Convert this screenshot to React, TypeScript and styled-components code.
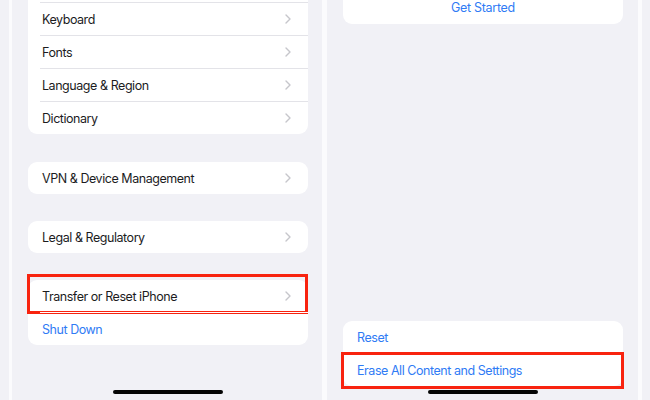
import React from "react";
import styled, { createGlobalStyle } from "styled-components";

const Global = createGlobalStyle`
  html, body { margin: 0; padding: 0; background: #ffffff; }
  body { font-family: Inter, "Noto Sans", "Liberation Sans", sans-serif; -webkit-font-smoothing: antialiased; }
`;

const Strip = styled.div`
  display: flex;
  width: 650px;
  height: 400px;
  overflow: hidden;
  background: #ffffff;
`;

const Gutter = styled.div<{ $w: number; $gray?: boolean }>`
  flex: 0 0 ${(p) => p.$w}px;
  background: ${(p) => (p.$gray ? "#f1f1f6" : "#fbfbfd")};
`;

const Phone = styled.div<{ $w: number; $pr: number }>`
  position: relative;
  flex: 0 0 ${(p) => p.$w}px;
  height: 400px;
  overflow: hidden;
  background: #f1f1f6;
  display: flex;
  flex-direction: column;
  padding: 0 ${(p) => p.$pr}px 0 16px;
  box-sizing: border-box;
`;

const Content = styled.div`
  display: flex;
  flex-direction: column;
  flex: 1;
`;

const Card = styled.div<{ $gap?: number; $clipped?: boolean }>`
  background: #ffffff;
  border-radius: ${(p) => (p.$clipped ? "0 0 9px 9px" : "9px")};
  margin-top: ${(p) => p.$gap ?? 0}px;
  display: flex;
  flex-direction: column;
`;

const Stub = styled.div<{ $h: number }>`
  height: ${(p) => p.$h}px;
`;

const Row = styled.div<{ $blue?: boolean; $first?: boolean; $plain?: boolean }>`
  position: relative;
  height: 32px;
  display: flex;
  align-items: center;
  justify-content: space-between;
  padding: 0 17px 0 ${(p) => (p.$first ? 14 : 2)}px;
  margin-left: ${(p) => (p.$first ? 0 : 12)}px;
  font-size: 12.5px;
  letter-spacing: -0.45px;
  color: ${(p) => (p.$blue ? "#2f7bf5" : "#1c1c1e")};
  border-top: ${(p) => (p.$first ? "none" : p.$plain ? "1px solid #ffffff" : "1px solid #e3e3e8")};
`;

const Highlight = styled.div<{ $t: number; $r: number; $b: number; $l: number }>`
  position: absolute;
  top: ${(p) => p.$t}px;
  right: ${(p) => p.$r}px;
  bottom: ${(p) => p.$b}px;
  left: ${(p) => p.$l}px;
  border: 3px solid #f8230f;
  pointer-events: none;
`;

const Spacer = styled.div`
  flex: 1;
`;

const CenterAction = styled.div`
  height: 24px;
  box-sizing: border-box;
  padding-top: 1px;
  display: flex;
  align-items: flex-start;
  justify-content: center;
  font-size: 12.5px;
  letter-spacing: -0.3px;
  color: #2f7bf5;
  line-height: 14px;
`;

const BottomPad = styled.div`
  height: 14px;
`;

const HomeBar = styled.div<{ $left: number; $w: number }>`
  position: absolute;
  left: ${(p) => p.$left}px;
  width: ${(p) => p.$w}px;
  top: 390px;
  height: 4px;
  border-radius: 3px;
  background: #050505;
`;

const Chevron = () => (
  <svg width="6" height="10" viewBox="0 0 6 10" fill="none">
    <path d="M1 1l4 4-4 4" stroke="#c6c6cb" strokeWidth="1.4" strokeLinecap="round" strokeLinejoin="round" />
  </svg>
);

const NavRow = ({ label, first }: { label: string; first?: boolean }) => (
  <Row $first={first}>
    <span>{label}</span>
    <Chevron />
  </Row>
);

export default function App() {
  return (
    <>
      <Global />
      <Strip>
        <Gutter $w={9} $gray />
        <Gutter $w={3} />
        <Phone $w={310} $pr={14}>
          <Content>
            <Card $clipped>
              <Stub $h={2} />
              <NavRow label="Keyboard" />
              <NavRow label="Fonts" />
              <NavRow label="Language & Region" />
              <NavRow label="Dictionary" />
            </Card>
            <Card $gap={28}>
              <NavRow label="VPN & Device Management" first />
            </Card>
            <Card $gap={27}>
              <NavRow label="Legal & Regulatory" first />
            </Card>
            <Card $gap={27}>
              <Row $first>
                <span>Transfer or Reset iPhone</span>
                <Chevron />
                <Highlight $t={-6} $r={0} $b={-2} $l={-1} />
              </Row>
              <Row $blue $plain>
                <span>Shut Down</span>
              </Row>
            </Card>
          </Content>
          <HomeBar $left={101} $w={110} />
        </Phone>
        <Gutter $w={5} />
        <Phone $w={311} $pr={15}>
          <Content>
            <Card $clipped>
              <CenterAction>Get Started</CenterAction>
            </Card>
            <Spacer />
            <Card>
              <Row $first $blue>
                <span>Reset</span>
              </Row>
              <Row $blue>
                <span>Erase All Content and Settings</span>
                <Highlight $t={-2} $r={-1} $b={-3} $l={-14} />
              </Row>
            </Card>
            <BottomPad />
          </Content>
          <HomeBar $left={101} $w={110} />
        </Phone>
        <Gutter $w={4} />
        <Gutter $w={8} $gray />
      </Strip>
    </>
  );
}
